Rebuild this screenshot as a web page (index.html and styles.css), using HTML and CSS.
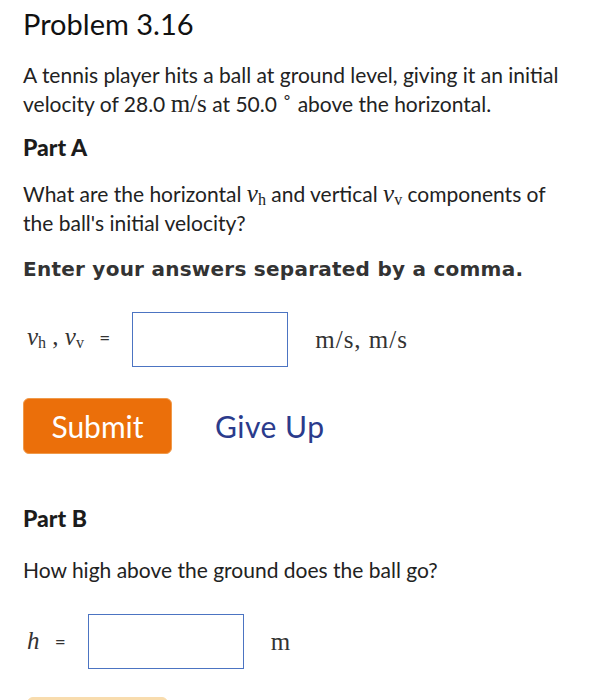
FILE: index.html
```html
<!DOCTYPE html>
<html lang="en">
<head>
  <meta charset="UTF-8" />
  <title>Problem 3.16</title>
  <meta name="viewport" content="width=device-width, initial-scale=1" />
  <link rel="stylesheet" href="styles.css">
</head>
<body>
  <div class="problem">
    <h1 class="title">Problem 3.16</h1>
    <p class="intro">A tennis player hits a ball at ground level, giving it an initial velocity of 28.0 <span class="math">m/s</span> at 50.0 <sup class="deg">&#8728;</sup> above the horizontal.</p>

    <h2 class="part">Part A</h2>
    <p class="question">What are the horizontal <span class="math"><i>v</i><sub>h</sub></span> and vertical <span class="math"><i>v</i><sub>v</sub></span> components of the ball's initial velocity?</p>
    <p class="instr">Enter your answers separated by a comma.</p>

    <div class="answer-row">
      <span class="math label"><i>v</i><sub>h</sub> , <i>v</i><sub>v</sub> <span class="eq">=</span></span>
      <div class="box"></div>
      <span class="math unit">m/s, m/s</span>
    </div>

    <div class="actions">
      <button class="submit" type="button">Submit</button>
      <a class="giveup" href="#">Give Up</a>
    </div>

    <h2 class="part part-b">Part B</h2>
    <p class="question">How high above the ground does the ball go?</p>

    <div class="answer-row row-b">
      <span class="math label"><i>h</i> <span class="eq">=</span></span>
      <div class="box"></div>
      <span class="math unit">m</span>
    </div>

    <button class="submit faded" type="button">Submit</button>
  </div>
</body>
</html>
```

FILE: styles.css
```css
body {
  margin: 0;
  padding: 0 23px;
  background: #fff;
  color: #222;
  font-family: Lato, "Open Sans", sans-serif;
}
.problem {
  width: 555px;
}
.title {
  margin: 6px 0 0;
  font-size: 29px;
  font-weight: 400;
  line-height: 36px;
  color: #111;
}
.intro,
.question {
  margin: 0;
  font-size: 21px;
  line-height: 29px;
}
.intro {
  margin-top: 18px;
}
.math {
  font-family: "Liberation Serif", serif;
  font-size: 25px;
  line-height: 0;
}
.math i {
  font-style: italic;
}
.math sub {
  font-size: 16px;
  vertical-align: -3px;
  line-height: 0;
}
.deg {
  font-family: "Liberation Serif", serif;
  font-size: 16px;
  line-height: 0;
  vertical-align: 9px;
}
.part {
  margin: 14px 0 0;
  font-size: 23px;
  font-weight: 900;
  line-height: 30px;
  color: #1c1c1c;
}
.part + .question {
  margin-top: 17px;
}
.instr {
  margin: 17px 0 0;
  font-family: "DejaVu Sans", sans-serif;
  font-size: 20px;
  font-weight: 700;
  letter-spacing: 0.25px;
  line-height: 30px;
  color: #333;
}
.answer-row {
  display: flex;
  align-items: center;
  margin-top: 28px;
  line-height: 30px;
}
.label {
  margin-left: 4px;
  color: #333;
}
.eq {
  font-family: Lato, sans-serif;
  font-size: 19px;
  margin-left: 9px;
}
.box {
  box-sizing: border-box;
  width: 156px;
  height: 55px;
  margin-left: 22px;
  border: 1.6px solid #4c74c2;
}
.unit {
  margin-left: 27px;
  letter-spacing: 1px;
  color: #333;
}
.actions {
  display: flex;
  align-items: center;
  gap: 43px;
  margin-top: 31px;
}
.submit {
  width: 149px;
  height: 56px;
  padding: 0;
  background: #eb6f0a;
  color: #fff;
  border: 1px solid #f09a4a;
  border-radius: 6px;
  font-family: Lato, sans-serif;
  font-size: 30px;
  cursor: pointer;
}
.giveup {
  color: #2b3b8c;
  font-size: 30px;
  letter-spacing: 0.5px;
  text-decoration: none;
}
.part-b {
  margin-top: 49px;
}
.part-b + .question {
  margin-top: 22px;
}
.row-b {
  margin-top: 30px;
}
.faded {
  display: block;
  margin: 28px 0 0 4px;
  width: 141px;
  background: #f8dcae;
  border-color: #f8dcae;
}
```
